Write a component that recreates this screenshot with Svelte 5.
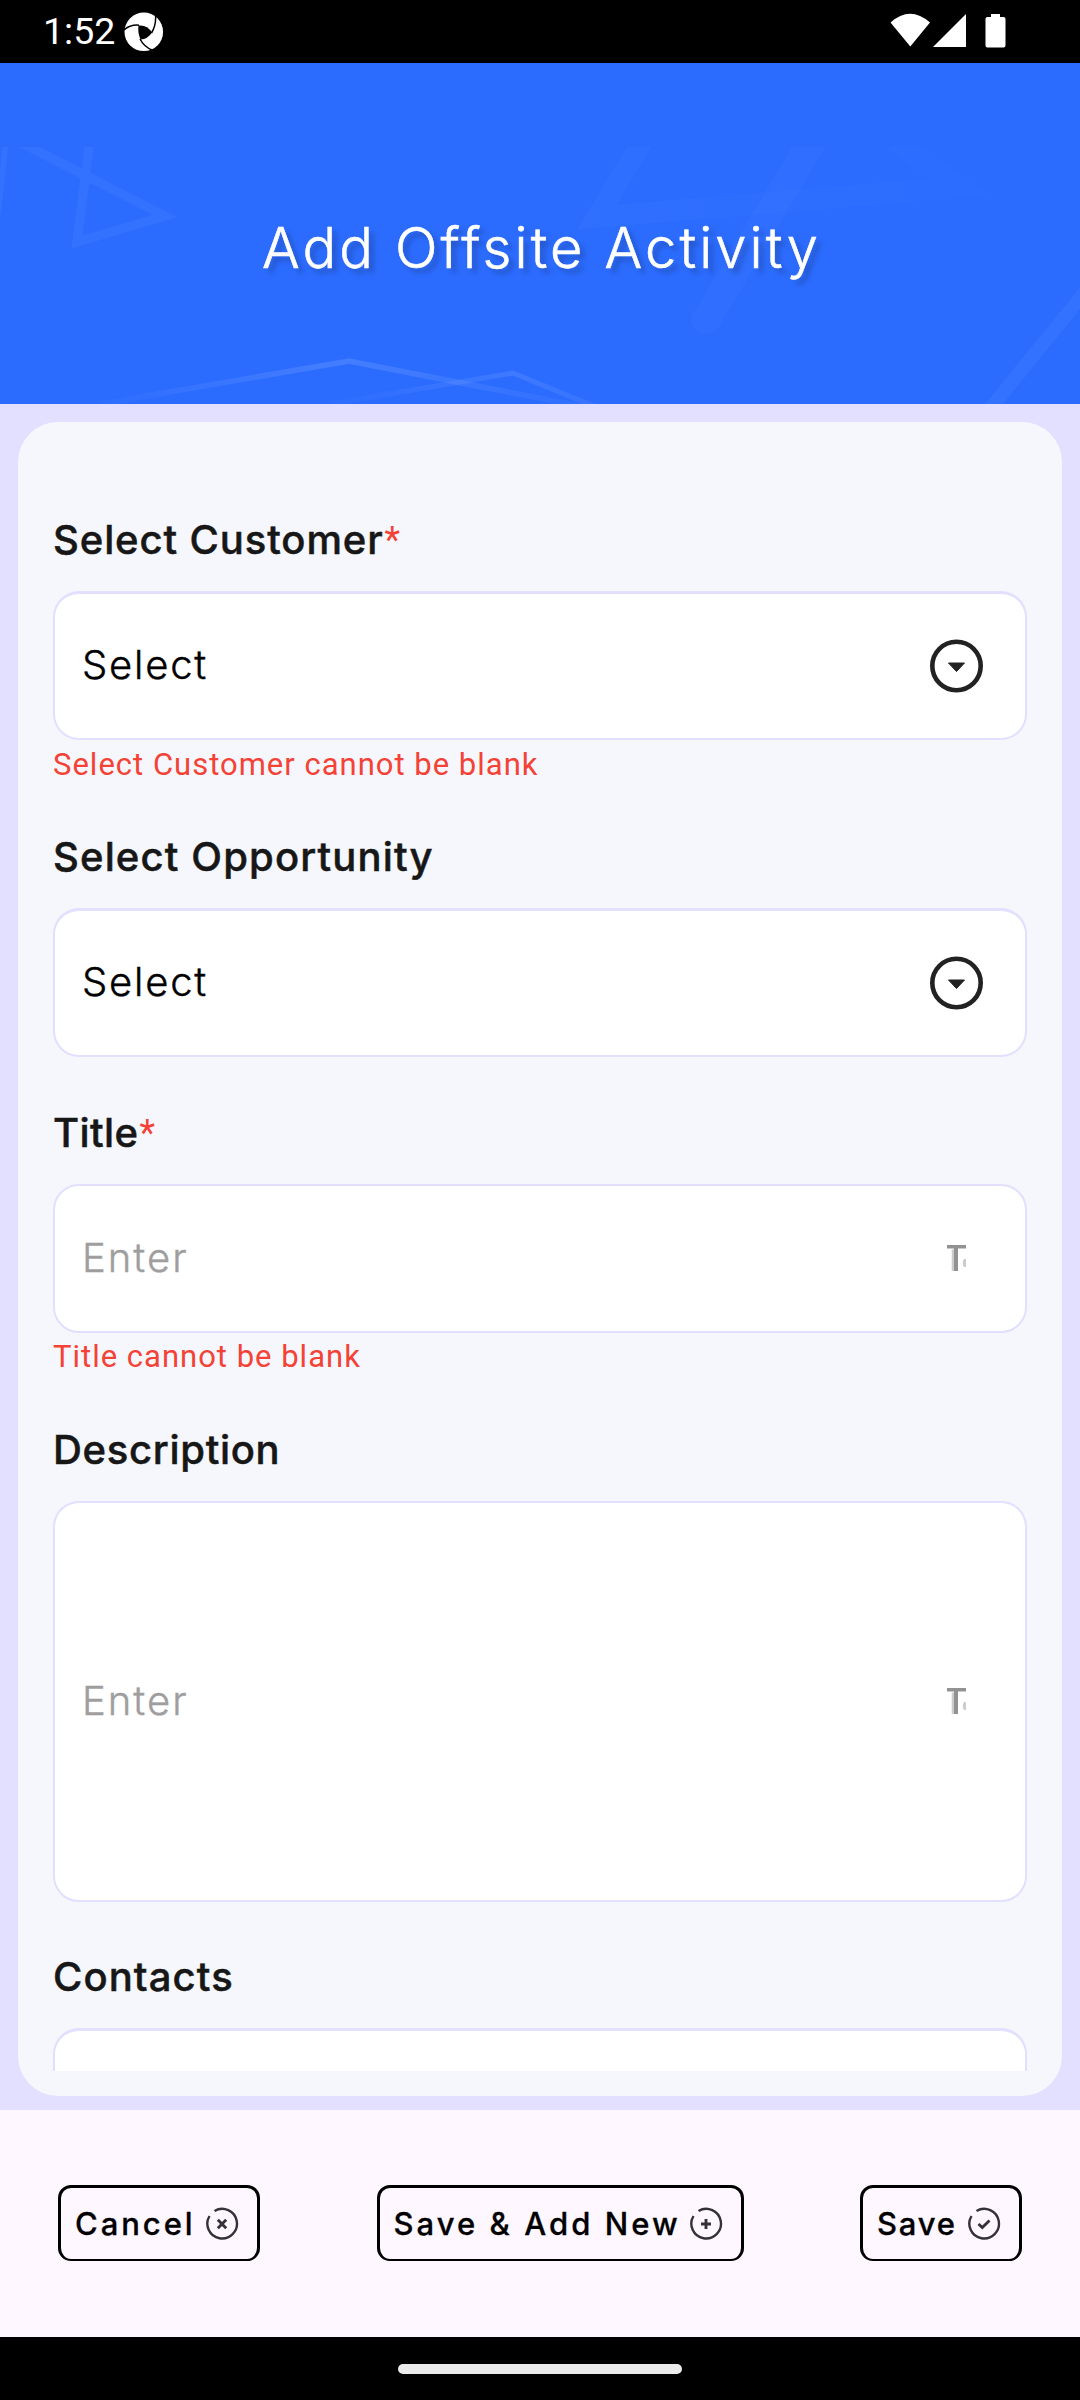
<script>
  const fields = [
    { label: 'Select Customer', required: true, kind: 'select', value: 'Select', error: 'Select Customer cannot be blank', size: 'w1' },
    { label: 'Select Opportunity', kind: 'select', value: 'Select', size: 'w2' },
    { label: 'Title', required: true, kind: 'text', value: 'Enter', error: 'Title cannot be blank', size: 'w3' },
    { label: 'Description', kind: 'text', value: 'Enter', tall: true, size: 'w4' },
    { label: 'Contacts', kind: 'empty', value: '', size: 'w5' }
  ];
  const actions = [
    { label: 'Cancel', cls: 'cancel', mark: 'M11.8 11.800 L20.200 20.200 M20.200 11.800 L11.800 20.200' },
    { label: 'Save & Add New', cls: 'again', mark: 'M16 11 V21 M11 16 H21' },
    { label: 'Save', cls: 'save', mark: 'M10.500 16 L14.300 19.500 L21.500 12.500' }
  ];
</script>

<div class="screen">
  <div class="status">
    <span class="time">1:52</span>
    <svg class="app" width="40" height="40" viewBox="0 0 40 40">
      <circle cx="19.8" cy="19.8" r="19.3" fill="#fff" />
      <path d="M14.5 13.5 Q23 12.5 28 20.5 Q24 27 16.5 27.5 Q13.5 20.5 14.5 13.5Z" fill="#000" />
      <path d="M0 18 Q6 12.5 15 13.2 M31.5 2 Q32.5 13 27.5 21 M16 27 Q20 35 29 38.5" fill="none" stroke="#000" stroke-width="1.5" />
    </svg>
    <svg class="tray" width="116" height="36" viewBox="0 0 116 36">
      <path d="M0.5 9.5 Q20 -8 40 9.5 L20.3 33.5Z" fill="#fff" />
      <path d="M43 34 L76 1 V34Z" fill="#fff" />
      <path d="M101 1 h9 v3 h3.5 q2 0 2 2 v26.500 q0 2 -2 2 h-16 q-2 0 -2 -2 V6 q0 -2 2 -2 h3.500z" fill="#fff" />
    </svg>
  </div>

  <header>
    <svg class="decor" width="1080" height="257" viewBox="0 147 1080 257">
      <defs>
        <linearGradient id="fadeA" gradientUnits="userSpaceOnUse" x1="100" y1="0" x2="590" y2="0">
          <stop offset="0" stop-color="#fff" stop-opacity=".01" />
          <stop offset=".5" stop-color="#fff" stop-opacity=".12" />
          <stop offset="1" stop-color="#fff" stop-opacity=".02" />
        </linearGradient>
        <linearGradient id="fadeB" gradientUnits="userSpaceOnUse" x1="340" y1="0" x2="640" y2="0">
          <stop offset="0" stop-color="#fff" stop-opacity=".01" />
          <stop offset=".58" stop-color="#fff" stop-opacity=".09" />
          <stop offset="1" stop-color="#fff" stop-opacity=".03" />
        </linearGradient>
        <linearGradient id="fadeC" gradientUnits="userSpaceOnUse" x1="580" y1="0" x2="990" y2="0">
          <stop offset="0" stop-color="#fff" stop-opacity=".022" />
          <stop offset="1" stop-color="#fff" stop-opacity=".004" />
        </linearGradient>
      </defs>
      <g fill="none" stroke="#fff">
        <path d="M6 140 L-2 215" stroke-width="6" opacity=".04" />
        <path d="M16 140 L165 216 L77 242 L90 140" stroke-width="9.500" stroke-miterlimit="10" opacity=".038" />
        <path d="M100 404 L349 361 L580 406" stroke-width="5.500" stroke="url(#fadeA)" />
        <path d="M330 404 L513 373 L596 407" stroke-width="5" stroke="url(#fadeB)" />
        <path d="M655 120 L597 217 L960 187 L880 130" stroke-width="21" stroke-miterlimit="10" stroke="url(#fadeC)" />
        <path d="M825 120 L706 320" stroke-width="29" stroke-linecap="round" opacity=".018" />
        <path d="M1090 286 L985 415" stroke-width="14" opacity=".04" />
      </g>
    </svg>
    <h1>Add Offsite Activity</h1>
  </header>

  <main>
    <section class="card">
      <div class="form">
        {#each fields as f}
          <div class="field">
            <div class="label"><span class={f.size}>{f.label}</span>{#if f.required}<i>*</i>{/if}</div>
            <div class="box" class:tall={f.tall} class:hint={f.kind === 'text'}>
              <span>{f.value}</span>
              {#if f.kind === 'select'}
                <svg width="54" height="54" viewBox="0 0 54 54">
                  <circle cx="27.500" cy="27" r="24.200" fill="none" stroke="#222" stroke-width="4.600" />
                  <path d="M19.500 24 H35.500 L27.500 32.500Z" fill="#222" stroke="#222" stroke-width="1" stroke-linejoin="round" />
                </svg>
              {:else if f.kind === 'text'}
                <svg width="54" height="54" viewBox="0 0 54 54">
                  <path d="M18 14 H37 V17.500 H18Z M25 17.500 H29 V40 H25Z" fill="#929292" />
                  <path d="M22.700 18.500 H25 V40 H22.700Z M37 28 H35 Q32.500 31.500 35 36 H37Z" fill="#cccccc" />
                </svg>
              {/if}
            </div>
            {#if f.error}<div class="error">{f.error}</div>{/if}
          </div>
        {/each}
      </div>
    </section>
  </main>

  <footer>
    {#each actions as a}
      <button class={a.cls}>
        <span>{a.label}</span>
        <svg width="34" height="34" viewBox="-1 -1 34 34" fill="none" stroke="#343236">
          <path d="M8.500 3 A14.800 14.800 0 1 1 3.500 8" stroke-width="2.400" />
          <path d={a.mark} stroke-width="2.900" />
        </svg>
      </button>
    {/each}
  </footer>
  <div class="nav"><div class="pill"></div></div>
</div>

<style>
  :global(body) { margin: 0; background: #000; }
  .screen { width: 1080px; height: 2400px; display: flex; flex-direction: column; overflow: hidden; font-family: Inter, "Liberation Sans", sans-serif; }
  .status { height: 63px; background: #000; color: #fff; display: flex; align-items: flex-start; box-sizing: border-box; padding: 0 74px 0 43px; }
  .time { font: 400 37.500px/44px Roboto, sans-serif; width: 81px; margin-top: 9px; white-space: nowrap; }
  .app { margin-top: 12px; }
  .tray { margin: 13px 0 0 auto; }
  header { height: 341px; background: #2b6cff; position: relative; display: flex; justify-content: center; }
  .decor { position: absolute; left: 0; bottom: 0; }
  h1 { position: relative; margin: 152px 0 0 3px; height: 66px; color: #fff; font-size: 56px; line-height: 66px; font-weight: 300; letter-spacing: 3.100px; -webkit-text-stroke: .6px #fff; white-space: nowrap; text-shadow: 5px 5px 5px rgba(30, 50, 110, .4); }
  main { height: 1706px; background: #e2dfff; box-sizing: border-box; padding: 18px 18px 14px; }
  .card { height: 1674px; background: #f6f7fd; border-radius: 40px; }
  .form { height: 1649px; box-sizing: border-box; padding: 94px 35px 0; overflow: hidden; display: flex; flex-direction: column; gap: 51.5px; }
  .field { flex: none; }
  .label { height: 48px; line-height: 48px; font-size: 40px; font-weight: 500; color: #171717; margin-bottom: 27px; white-space: nowrap; display: flex; }
  .label span { -webkit-text-stroke: .5px #171717; }
  .w1 { letter-spacing: .9px; }
  .w2 { letter-spacing: 1.150px; }
  .w3 { letter-spacing: .4px; }
  .w4 { letter-spacing: .7px; }
  .w5 { letter-spacing: 1.100px; }
  .label i { font: 400 36px/48px Roboto, sans-serif; color: #f44336; margin-left: 1px; }
  .box { height: 149px; box-sizing: border-box; background: #fff; border: 2px solid #e2dfff; border-top-width: 3px; border-radius: 26px; display: flex; align-items: center; justify-content: space-between; padding: 0 42px 0 27px; font-size: 40px; font-weight: 300; letter-spacing: 1.800px; color: #000; }
  .box span { margin-bottom: 4px; -webkit-text-stroke: .4px currentColor; }
  .tall { height: 401px; }
  .hint { color: #9e9e9e; border-top-width: 2px; letter-spacing: 2px; }
  .hint span { margin-bottom: 2px; }
  .error { font: 400 31px/36px Roboto, sans-serif; letter-spacing: 1px; color: #f44336; margin-top: 6.500px; height: 35px; white-space: nowrap; }
  footer { height: 227px; box-sizing: border-box; background: #fef7ff; display: flex; justify-content: space-between; align-items: flex-start; padding: 75px 58px 0; }
  button { height: 76px; box-sizing: border-box; border: 3px solid #000; border-bottom-width: 2px; border-radius: 13px; background: none; padding: 0 18px 0 14px; display: flex; align-items: center; justify-content: space-between; font: 500 31px/38px Inter, sans-serif; letter-spacing: 2px; color: #000; white-space: nowrap; -webkit-text-stroke: .3px #000; }
  .cancel { width: 202px; letter-spacing: 2.950px; }
  .again { width: 367px; letter-spacing: 3.050px; }
  .save { width: 162px; letter-spacing: 1.800px; }
  .nav { height: 63px; background: #000; display: flex; justify-content: center; align-items: flex-start; }
  .pill { width: 284px; height: 10px; margin-top: 27px; border-radius: 5px; background: #ebebeb; }
</style>
